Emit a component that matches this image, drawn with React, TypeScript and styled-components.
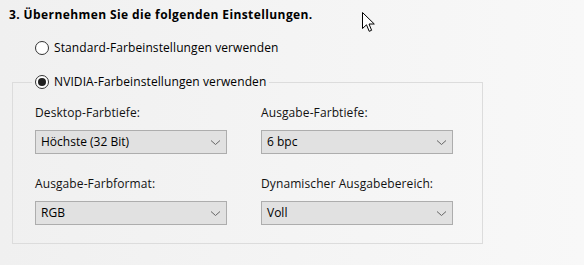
import styled, { createGlobalStyle } from "styled-components";

const GlobalStyle = createGlobalStyle`
  html, body {
    margin: 0;
    padding: 0;
  }
  body {
    width: 584px;
    height: 265px;
    overflow: hidden;
    background: linear-gradient(90deg, #f0f0f0 0%, #f4f4f4 50%, #f8f8f8 100%);
    font-family: "Open Sans", "Noto Sans", sans-serif;
    font-size: 12px;
    color: #000;
  }
`;

const Page = styled.div`
  position: relative;
  display: flex;
  flex-direction: column;
  padding: 7px 0 0 9px;
`;

const Title = styled.div`
  font-weight: 700;
  line-height: 16px;
  letter-spacing: 0.4px;
`;

const RadioRow = styled.label`
  display: flex;
  align-items: center;
  gap: 5px;
  line-height: 16px;
  white-space: nowrap;
  letter-spacing: 0.1px;
`;

const RadioCircle = styled.span<{ $checked?: boolean }>`
  box-sizing: border-box;
  width: 14px;
  height: 14px;
  border-radius: 50%;
  border: 1px solid #333;
  background: #fff;
  display: flex;
  align-items: center;
  justify-content: center;

  &::after {
    content: "";
    display: ${(p) => (p.$checked ? "block" : "none")};
    width: 8px;
    height: 8px;
    border-radius: 50%;
    background: #202020;
  }
`;

const FirstOption = styled.div`
  margin: 17px 0 0 26px;
`;

const Group = styled.fieldset`
  box-sizing: border-box;
  width: 471px;
  margin: 18px 0 0 3px;
  padding: 15px 0 18px 22px;
  border: 1px solid #dcdcdc;
  min-inline-size: 0;
`;

const Legend = styled.legend`
  padding: 0 3px;
  margin-left: -3px;
`;

const Grid = styled.div`
  display: grid;
  grid-template-columns: 192px 192px;
  column-gap: 34px;
  row-gap: 22px;
`;

const Field = styled.div`
  display: flex;
  flex-direction: column;
  gap: 9px;
`;

const FieldLabel = styled.div`
  line-height: 16px;
  color: #111;
  letter-spacing: 0.1px;
`;

const Select = styled.div`
  box-sizing: border-box;
  height: 24px;
  border: 1px solid #adadad;
  background: #e1e1e1;
  display: flex;
  align-items: center;
  justify-content: space-between;
  padding: 0 5px 0 5px;
  line-height: 16px;
`;

const Chevron = styled.svg`
  display: block;
`;

const Cursor = styled.svg`
  position: absolute;
  left: 362px;
  top: 12px;
`;

const fields = [
  { label: "Desktop-Farbtiefe:", value: "Höchste (32 Bit)" },
  { label: "Ausgabe-Farbtiefe:", value: "6 bpc" },
  { label: "Ausgabe-Farbformat:", value: "RGB" },
  { label: "Dynamischer Ausgabebereich:", value: "Voll" },
];

const App = () => {
  return (
    <>
      <GlobalStyle />
      <Page>
        <Title>3. Übernehmen Sie die folgenden Einstellungen.</Title>
        <FirstOption>
          <RadioRow>
            <RadioCircle />
            Standard-Farbeinstellungen verwenden
          </RadioRow>
        </FirstOption>
        <Group>
          <Legend>
            <RadioRow>
              <RadioCircle $checked />
              NVIDIA-Farbeinstellungen verwenden
            </RadioRow>
          </Legend>
          <Grid>
            {fields.map((f) => (
              <Field key={f.label}>
                <FieldLabel>{f.label}</FieldLabel>
                <Select>
                  <span>{f.value}</span>
                  <Chevron width="11" height="7" viewBox="0 0 11 7">
                    <path d="M1 1.5 L5.5 5.5 L10 1.5" fill="none" stroke="#666" strokeWidth="1" />
                  </Chevron>
                </Select>
              </Field>
            ))}
          </Grid>
        </Group>
        <Cursor width="14" height="21" viewBox="0 0 14 21">
          <path
            d="M0.5 0.5 L0.5 16.5 L4.5 12.8 L7.2 19.3 L9.6 18.3 L7 12 L12.3 12 Z"
            fill="#fff"
            stroke="#000"
            strokeWidth="1"
            strokeLinejoin="miter"
          />
        </Cursor>
      </Page>
    </>
  );
};

export default App;
